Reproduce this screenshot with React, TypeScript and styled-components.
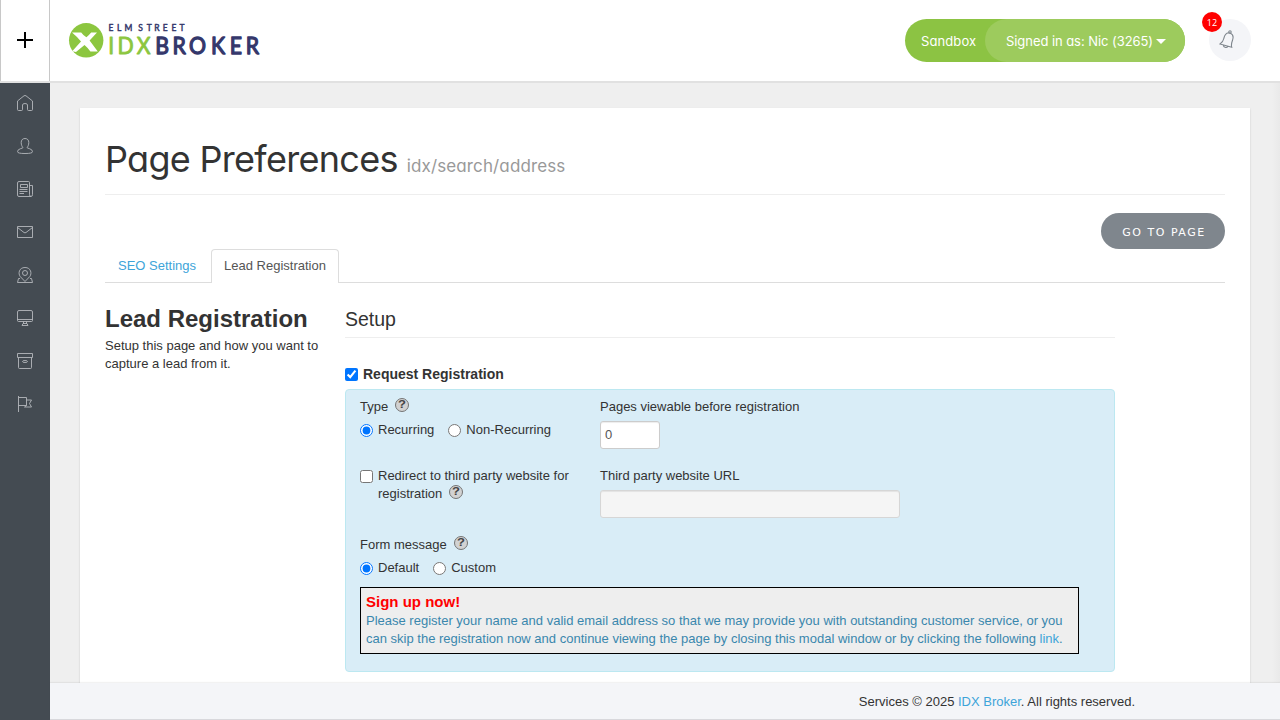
import React from 'react';
import styled, { createGlobalStyle } from 'styled-components';

const GlobalStyle = createGlobalStyle`
  * { box-sizing: border-box; }
  body {
    margin: 0;
    background: #eee;
    color: #333;
    font: 13px/18px "Liberation Sans", Arial, sans-serif;
    overflow: hidden;
  }
  a { color: #3da4d9; text-decoration: none; }
`;

const rounded = `font-family: Inter, "Open Sans", sans-serif; font-feature-settings: "cv11" 1;`;

const Page = styled.div`
  display: flex;
  flex-direction: column;
  height: 720px;
`;

const Header = styled.header`
  display: flex;
  flex: none;
  height: 83px;
  background: #fff;
  border-bottom: 2px solid #e1e1e1;
`;

const AddButton = styled.button`
  display: flex;
  align-items: center;
  justify-content: center;
  width: 50px;
  height: 81px;
  padding: 0 0 1px;
  background: #fff;
  border: solid #c8c8c8;
  border-width: 0 1px;
`;

const Logo = styled.svg`
  display: block;
  margin: 20px 0 0 18px;
  font-family: Lato, sans-serif;
  stroke-linejoin: round;
`;

const Account = styled.div`
  display: flex;
  width: 280px;
  height: 43px;
  margin: 19px 24px 0 auto;
  border-radius: 22px;
  background: #8cc343;
  color: #fff;
  font-size: 13px;
  line-height: 44px;
  ${rounded}
`;

const AccountName = styled.span`
  width: 80px;
  padding-left: 16px;
  letter-spacing: 0.1px;
`;

const SignedIn = styled.span`
  display: flex;
  align-items: center;
  width: 200px;
  padding-left: 21px;
  border-radius: 22px;
  background: #9dcb5d;
  white-space: nowrap;
  letter-spacing: -0.06px;
`;

const Caret = styled.i`
  margin: 1px 0 0 3px;
  border: 5px solid transparent;
  border-top-color: #fff;
  border-bottom: 0;
`;

const Bell = styled.div`
  position: relative;
  display: flex;
  width: 42px;
  height: 42px;
  margin: 19px 29px 0 0;
  padding: 11px 0 0 10px;
  border-radius: 50%;
  background: #f4f5f8;
`;

const Count = styled.span`
  position: absolute;
  left: -7px;
  top: -7px;
  width: 20px;
  height: 20px;
  border-radius: 50%;
  background: #f00;
  color: #fff;
  text-align: center;
  font: 9px/21px "Open Sans", sans-serif;
`;

const Body = styled.div`
  display: flex;
  flex: 1;
  min-height: 0;
`;

const Sidebar = styled.nav`
  display: flex;
  flex-direction: column;
  align-items: center;
  gap: 27px;
  width: 50px;
  padding-top: 12px;
  background: #444b52;
`;

const NavIcon = styled.svg`
  display: block;
  flex: none;
  width: 16px;
  height: 16px;
  fill: none;
  stroke: #b4b8bc;
  stroke-width: 0.9;
  stroke-linejoin: round;
`;

const Main = styled.main`
  display: flex;
  flex: 1;
  flex-direction: column;
  min-width: 0;
  background: linear-gradient(to left, #e9e9e9, #efefef 8px);
`;

const Card = styled.section`
  flex: 1;
  min-height: 0;
  margin: 25px 30px 0;
  padding: 25px 25px 0;
  overflow: hidden;
  background: #fff;
  box-shadow: 0 1px 2px rgba(0, 0, 0, 0.15);
`;

const Title = styled.h1`
  height: 62px;
  margin: 0;
  border-bottom: 1px solid #eee;
  font-size: 36px;
  font-weight: 400;
  line-height: 53px;
  letter-spacing: -0.7px;
  white-space: nowrap;
  ${rounded}
`;

const Path = styled.small`
  margin-left: 9px;
  color: #999;
  font-size: 17px;
  letter-spacing: 0.12px;
`;

const Actions = styled.div`
  display: flex;
  justify-content: flex-end;
  padding-top: 18px;
`;

const PillButton = styled.button`
  width: 124px;
  height: 36px;
  padding: 2px 0 0 2px;
  border: 0;
  border-radius: 18px;
  background: #7f868d;
  color: #fff;
  font: 11px "DejaVu Sans", sans-serif;
  letter-spacing: 1.5px;
`;

const Tabs = styled.div`
  display: flex;
  height: 34px;
  border-bottom: 1px solid #ddd;
`;

const Tab = styled.a<{ $active?: boolean }>`
  height: 34px;
  margin-right: 2px;
  padding: 7px 12px 0;
  border: 1px solid ${p => (p.$active ? '#ddd' : 'transparent')};
  border-bottom: 0;
  border-radius: 4px 4px 0 0;
  color: ${p => (p.$active ? '#555' : '#3da4d9')};
  background: ${p => (p.$active ? '#fff' : 'transparent')};
`;

const Columns = styled.div`
  display: flex;
  gap: 20px;
  padding-top: 18px;
`;

const Intro = styled.aside`
  width: 220px;
`;

const IntroTitle = styled.h3`
  margin: 0;
  font-size: 24px;
  line-height: 36px;
`;

const Form = styled.div`
  width: 770px;
`;

const Legend = styled.h4`
  height: 37px;
  margin: 0 0 27px;
  border-bottom: 1px solid #eee;
  font-size: 19.5px;
  font-weight: 400;
  line-height: 36px;
`;

const Option = styled.label<{ $strong?: boolean }>`
  display: flex;
  gap: 5px;
  ${p => p.$strong && 'font-size: 14px; font-weight: bold;'}
`;

const Box = styled.input`
  flex: none;
  width: 13px;
  height: 13px;
  margin: 3px 0 0;
`;

const Panel = styled.div`
  height: 283px;
  margin-top: 6px;
  padding: 8px 14px;
  border: 1px solid #bce8f1;
  border-radius: 4px;
  background: #d9edf7;
`;

const FieldRow = styled.div`
  display: grid;
  grid-template-columns: 220px 1fr;
  column-gap: 20px;
  height: 69px;
`;

const Options = styled.div`
  display: flex;
  gap: 14px;
  margin-top: 5px;
`;

const TextInput = styled.input<{ $width: number }>`
  display: block;
  width: ${p => p.$width}px;
  height: 28px;
  margin-top: 5px;
  padding: 0 4px 1px;
  border: 1px solid #ccc;
  border-radius: 3px;
  background: #fff;
  box-shadow: inset 0 1px 1px rgba(0, 0, 0, 0.075);
  color: #555;
  font: 13px "Liberation Sans", Arial, sans-serif;
  &:disabled { background: #f5f5f5; border-color: #d6d6d6; }
`;

const HelpSvg = styled.svg`
  margin-left: 7px;
  vertical-align: -1px;
  font: bold 10px "Liberation Sans", Arial, sans-serif;
`;

const Preview = styled.div`
  width: 719px;
  height: 67px;
  margin-top: 10px;
  padding: 5px;
  border: 1px solid #000;
  background: #eee;
  color: #3a87ad;
  white-space: nowrap;
`;

const PreviewTitle = styled.div`
  height: 19px;
  color: #f00;
  font-size: 15px;
  font-weight: bold;
`;

const Footer = styled.footer`
  z-index: 1;
  height: 37px;
  padding: 10px 145px 0 0;
  border-bottom: 1px solid #d8d8dc;
  background: #f4f5f8;
  box-shadow: 0 -1px 1px rgba(0, 0, 0, 0.05);
  text-align: right;
`;

const Help = () => (
  <HelpSvg width="14" height="14" viewBox="0 0 14 14">
    <circle cx="7" cy="7" r="6.5" fill="#d2d2d2" stroke="#747474" strokeWidth="1" />
    <text transform="translate(3 10.4) scale(1.3 1)" fill="#444">?</text>
  </HelpSvg>
);

const navShapes = [
  <path d="M.5 7V14.5Q.5 15.5 1.5 15.5H4.5Q5.5 15.5 5.5 14.5V10Q5.5 8.5 8 8.5T10.5 10V14.5Q10.5 15.5 11.5 15.5H14.5Q15.5 15.5 15.5 14.5V6L9 .8Q8 .2 7 .8L.5 6Z" />,
  <path d="M8 .5C5.5.5 4.2 2.2 4.2 4.5C4.2 6.8 5 8.6 6 9.5Q5.5 10.2 3.5 10.7Q.5 11.5 .5 13.8Q.5 15.5 8 15.5T15.5 13.8Q15.5 11.5 12.5 10.7Q10.5 10.2 10 9.5C11 8.6 11.8 6.8 11.8 4.5C11.8 2.2 10.5.5 8 .5Z" />,
  <path d="M2 .5H11.5Q12.5.5 12.5 1.5V13.5Q12.5 15.5 14 15.5T15.5 13.5V4.5H12.5M14 15.5H2Q.5 15.5.5 14V2Q.5.5 2 .5M3.5 3.5H10.5V6.5H3.5ZM2.5 8.5H10.5M2.5 10.5H10.5M2.5 12.5H7" />,
  <path d="M.5 2.5H15.5V13.5H.5ZM.5 3.5L7 8.5Q8 9.2 9 8.5L15.5 3.5" />,
  <><path d="M8 14.5L3.2 9.5C.9 6.5 2 .5 8 .5S15.1 6.5 12.8 9.5ZM3 11.5H1.5L.5 15.5H15.5L14.5 11.5H13" /><circle cx="8" cy="6" r="2.5" /></>,
  <path d="M2 .5H14Q15.5.5 15.5 2V10.5Q15.5 11.5 14.5 11.5H1.5Q.5 11.5.5 10.5V2Q.5.5 2 .5M.5 9.5H15.5M6.5 11.5V14M9.5 11.5V14M5 15.5L6 13.5H10L11 15.5Z" />,
  <path d="M.5.5H15.5V4.5H.5ZM1.5 4.5V14.5Q1.5 15.5 2.5 15.5H13.5Q14.5 15.5 14.5 14.5V4.5M5.5 8.5Q5.5 7.5 8 7.5T10.5 8.5T8 9.5T5.5 8.5" />,
  <path d="M1.5 0V16M1.5 1.5H9.5V9.5H1.5M9.5 4H14.5L12.5 7.5L14.5 11H7.5L9.5 9.5" />,
];

export default function App() {
  return (
    <Page>
      <GlobalStyle />
      <Header>
        <AddButton aria-label="Add">
          <svg width="16" height="16" viewBox="0 0 16 16"><path d="M8 0V16M0 8H16" stroke="#000" strokeWidth="2" /></svg>
        </AddButton>
        <Logo width="196" height="42" viewBox="0 0 196 42">
          <circle cx="18.2" cy="20.3" r="17.2" fill="#8cc63f" />
          <path d="M4 12.4H13.2Q15 15 18.4 17.2Q21.5 14.5 23.2 12.4H29L21.6 20.4L29.8 31.5H22.4Q19.5 27.5 16.5 25L8 32L4.2 31.2L13 21.5Q8.5 16 4 12.4Z" fill="#fff" />
          <text transform="scale(.88 1)" x="46.1 55.8 64.3 74 79.8 89.5 98 107.8 117.6 126.8" y="11.5" fontSize="9.6" fill="#34376b" stroke="#34376b" strokeWidth=".5">ELM STREET</text>
          <g transform="scale(.9 1)" fontSize="23.6">
            <text x="44.6 55 76.3" y="34" fill="#8cc63f" stroke="#8cc63f" strokeWidth=".9">IDX</text>
            <text x="96.9 116 134.4 159 179.7 197.5" y="34" fill="#34376b" stroke="#34376b" strokeWidth="1.3">BROKER</text>
          </g>
        </Logo>
        <Account>
          <AccountName>Sandbox</AccountName>
          <SignedIn>Signed in as: Nic (3265)<Caret /></SignedIn>
        </Account>
        <Bell>
          <svg width="17" height="20" viewBox="0 0 17 20" fill="none" stroke="#7f868d" strokeWidth="1.1">
            <path d="M9.5 2.8C6.5 3 5.5 5.6 4.8 8.5C4.2 11.5 3 12.8 1 14L12.7 17.2C12 14.8 12.5 13 13.5 10.3C14.5 7.3 14.5 4.3 11.3 3.2ZM4.5 15.2C4.2 17.2 7.6 18.5 8.8 16.4" />
            <circle cx="11" cy="2" r="1.2" />
          </svg>
          <Count>12</Count>
        </Bell>
      </Header>
      <Body>
        <Sidebar>
          {navShapes.map((shape, i) => <NavIcon key={i} viewBox="0 0 16 16">{shape}</NavIcon>)}
        </Sidebar>
        <Main>
          <Card>
            <Title>Page Preferences<Path>idx/search/address</Path></Title>
            <Actions><PillButton>GO TO PAGE</PillButton></Actions>
            <Tabs>
              <Tab>SEO Settings</Tab>
              <Tab $active>Lead Registration</Tab>
            </Tabs>
            <Columns>
              <Intro>
                <IntroTitle>Lead Registration</IntroTitle>
                Setup this page and how you want to capture a lead from it.
              </Intro>
              <Form>
                <Legend>Setup</Legend>
                <Option $strong><Box type="checkbox" defaultChecked />Request Registration</Option>
                <Panel>
                  <FieldRow>
                    <div>
                      <div>Type<Help /></div>
                      <Options>
                        <Option><Box type="radio" name="type" defaultChecked />Recurring</Option>
                        <Option><Box type="radio" name="type" />Non-Recurring</Option>
                      </Options>
                    </div>
                    <div>
                      Pages viewable before registration
                      <TextInput $width={60} defaultValue="0" />
                    </div>
                  </FieldRow>
                  <FieldRow>
                    <Option><Box type="checkbox" /><span>Redirect to third party website for registration<Help /></span></Option>
                    <div>
                      Third party website URL
                      <TextInput $width={300} disabled />
                    </div>
                  </FieldRow>
                  <div>Form message<Help /></div>
                  <Options>
                    <Option><Box type="radio" name="message" defaultChecked />Default</Option>
                    <Option><Box type="radio" name="message" />Custom</Option>
                  </Options>
                  <Preview>
                    <PreviewTitle>Sign up now!</PreviewTitle>
                    Please register your name and valid email address so that we may provide you with outstanding customer service, or you<br />
                    can skip the registration now and continue viewing the page by closing this modal window or by clicking the following <a>link</a>.
                  </Preview>
                </Panel>
              </Form>
            </Columns>
          </Card>
          <Footer>Services © 2025 <a>IDX Broker</a>. All rights reserved.</Footer>
        </Main>
      </Body>
    </Page>
  );
}
